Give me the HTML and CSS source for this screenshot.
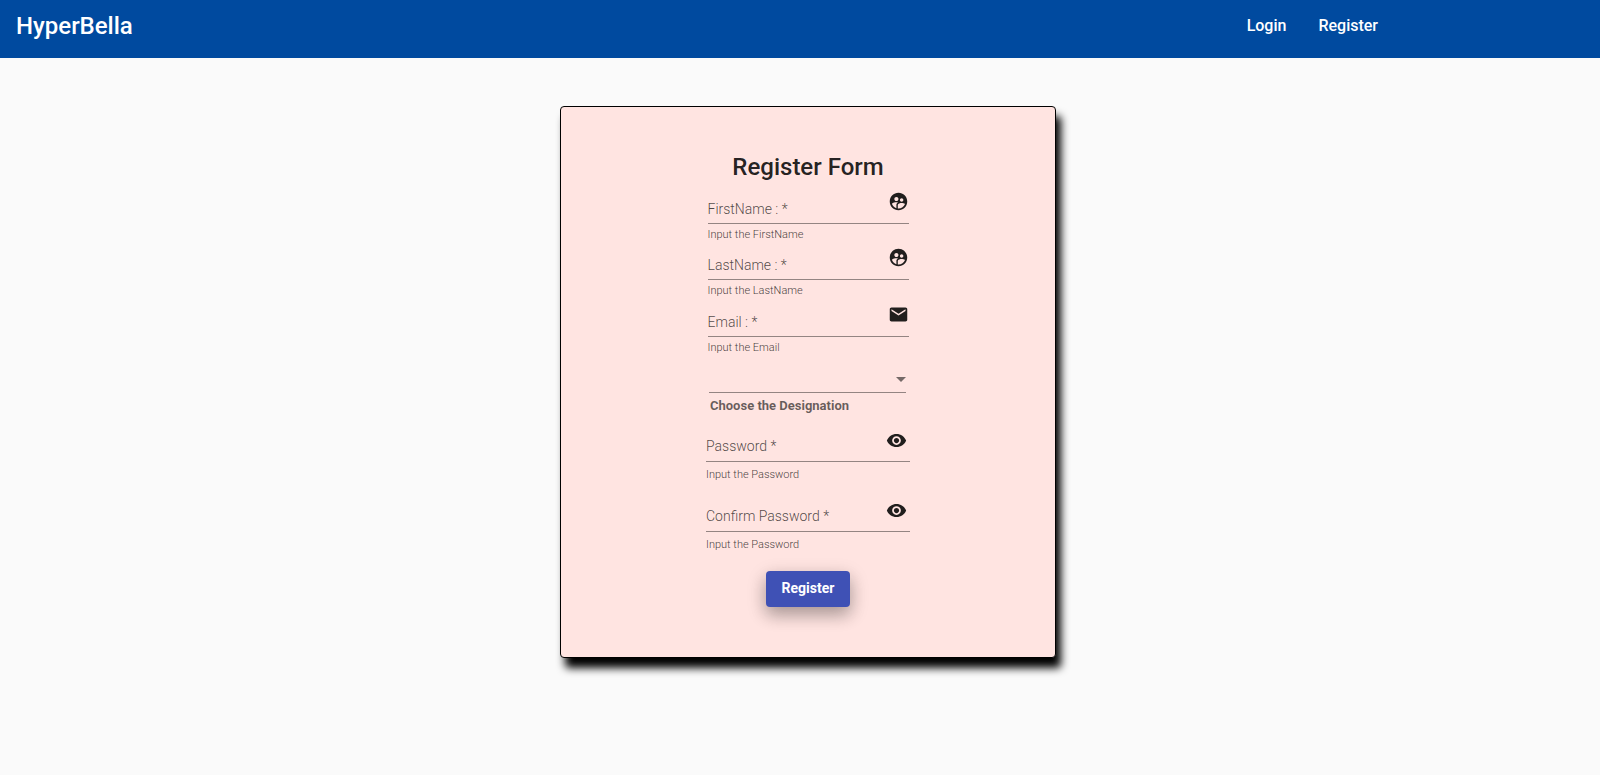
FILE: index.html
```html
<!DOCTYPE html>
<html lang="en">
<head>
<meta charset="utf-8">
<title>HyperBella</title>
<meta name="viewport" content="width=device-width, initial-scale=1">
<link rel="stylesheet" href="styles.css">
</head>
<body>
<svg class="sprite" aria-hidden="true">
  <symbol id="icon-people" viewBox="0 0 24 24"><path d="M11.99 2c-5.52 0-10 4.48-10 10s4.48 10 10 10 10-4.48 10-10-4.48-10-10-10zm3.61 6.34c1.07 0 1.93.86 1.93 1.93 0 1.07-.86 1.93-1.93 1.93-1.07 0-1.93-.86-1.93-1.93-.01-1.07.86-1.93 1.93-1.93zm-6-1.58c1.3 0 2.36 1.06 2.36 2.36 0 1.3-1.06 2.36-2.36 2.36s-2.36-1.06-2.36-2.36c0-1.31 1.05-2.36 2.36-2.36zm0 9.13v3.75c-2.4-.75-4.3-2.6-5.14-4.96 1.05-1.12 3.67-1.69 5.14-1.69.53 0 1.2.08 1.9.22-1.64.87-1.9 2.02-1.9 2.68zM11.99 20c-.27 0-.53-.01-.79-.04v-4.07c0-1.42 2.94-2.13 4.4-2.13 1.07 0 2.92.39 3.84 1.15-1.17 2.97-4.06 5.09-7.45 5.09z"/></symbol>
  <symbol id="icon-mail" viewBox="0 0 24 24"><path d="M20 4H4c-1.1 0-1.99.9-1.99 2L2 18c0 1.1.9 2 2 2h16c1.1 0 2-.9 2-2V6c0-1.1-.9-2-2-2zm0 4l-8 5-8-5V6l8 5 8-5v2z"/></symbol>
  <symbol id="icon-eye" viewBox="0 0 24 24"><path d="M12 4.500C7 4.500 2.730 7.610 1 12c1.730 4.390 6 7.500 11 7.500s9.270-3.110 11-7.500c-1.730-4.390-6-7.500-11-7.500zM12 17c-2.760 0-5-2.240-5-5s2.240-5 5-5 5 2.240 5 5-2.240 5-5 5zm0-8c-1.660 0-3 1.340-3 3s1.340 3 3 3 3-1.340 3-3-1.340-3-3-3z"/></symbol>
</svg>
<header class="toolbar">
  <a class="brand" href="#">HyperBella</a>
  <nav class="nav">
    <a class="nav-link" href="#login">Login</a>
    <a class="nav-link" href="#register">Register</a>
  </nav>
</header>
<main class="page">
  <form class="card">
    <h1 class="title">Register Form</h1>
    <div class="field">
      <div class="box">
        <label class="label" for="first">FirstName : *</label>
        <input class="input" id="first" type="text" aria-describedby="first-hint">
        <svg class="icon" aria-hidden="true"><use href="#icon-people"/></svg>
      </div>
      <p class="hint" id="first-hint">Input the FirstName</p>
    </div>
    <div class="field">
      <div class="box">
        <label class="label" for="last">LastName : *</label>
        <input class="input" id="last" type="text" aria-describedby="last-hint">
        <svg class="icon" aria-hidden="true"><use href="#icon-people"/></svg>
      </div>
      <p class="hint" id="last-hint">Input the LastName</p>
    </div>
    <div class="field field-email">
      <div class="box">
        <label class="label" for="email">Email : *</label>
        <input class="input" id="email" type="email" aria-describedby="email-hint">
        <svg class="icon" aria-hidden="true"><use href="#icon-mail"/></svg>
      </div>
      <p class="hint" id="email-hint">Input the Email</p>
    </div>
    <div class="field field-select">
      <div class="box">
        <select class="select" id="designation"><option value=""></option></select>
        <svg class="arrow" viewBox="0 0 10 5" aria-hidden="true"><path d="M0 0h10L5 5z"/></svg>
      </div>
      <label class="select-label" for="designation">Choose the Designation</label>
    </div>
    <div class="field field-password">
      <div class="box">
        <label class="label" for="password">Password *</label>
        <input class="input" id="password" type="password" aria-describedby="password-hint">
        <button class="toggle" type="button" aria-label="Show password"><svg class="icon" aria-hidden="true"><use href="#icon-eye"/></svg></button>
      </div>
      <p class="hint" id="password-hint">Input the Password</p>
    </div>
    <div class="field field-password">
      <div class="box">
        <label class="label" for="confirm">Confirm Password *</label>
        <input class="input" id="confirm" type="password" aria-describedby="confirm-hint">
        <button class="toggle" type="button" aria-label="Show confirmed password"><svg class="icon" aria-hidden="true"><use href="#icon-eye"/></svg></button>
      </div>
      <p class="hint" id="confirm-hint">Input the Password</p>
    </div>
    <button class="submit" type="submit">Register</button>
  </form>
</main>
</body>
</html>
```
FILE: styles.css
```css
* {
  box-sizing: border-box;
}

body {
  margin: 0;
  min-height: 100vh;
  background: #fafafa;
  color: rgba(0, 0, 0, 0.87);
  font-family: Roboto, "Liberation Sans", sans-serif;
  font-size: 14px;
}

.sprite {
  display: none;
}

.toolbar {
  display: flex;
  justify-content: space-between;
  align-items: flex-start;
  padding: 10px 206px 16px 16px;
  background: #004a9f;
  line-height: 32px;
}

.brand,
.nav-link {
  color: #fff;
  font-weight: 500;
  text-decoration: none;
}

.brand {
  font-size: 24px;
}

.nav {
  display: flex;
}

.nav-link {
  padding: 0 16px;
  font-size: 16px;
}

.page {
  padding: 48px 0;
}

.card {
  display: flex;
  flex-direction: column;
  align-items: center;
  width: 31%;
  min-width: 280px;
  margin-left: 35%;
  padding: 44px 16px 50px;
  border: 1px solid #000;
  border-radius: 4px;
  background: #ffe4e1;
  box-shadow: 5px 10px 8px #000;
}

.title {
  margin: 0 0 7px;
  font-size: 24px;
  font-weight: 500;
  line-height: 32px;
}

.field {
  width: 201px;
}

.box {
  display: grid;
  grid-template-columns: 1fr auto;
  align-items: end;
  height: 34px;
  border-bottom: 1px solid rgba(0, 0, 0, 0.42);
}

.label {
  grid-area: 1 / 1;
  padding-bottom: 6px;
  color: rgba(0, 0, 0, 0.7);
  font-weight: 300;
  line-height: 16px;
}

.input {
  grid-area: 1 / 1;
  width: 100%;
  height: 28px;
  padding: 0;
  border: 0;
  outline: 0;
  background: transparent;
  font: inherit;
}

.icon {
  display: block;
  align-self: start;
  width: 21px;
  height: 21px;
  margin-top: 1px;
  fill: currentColor;
}

.toggle {
  align-self: start;
  margin: 1px 3px 0 0;
  padding: 0;
  border: 0;
  background: transparent;
  color: inherit;
}

.hint {
  margin: 0;
  padding: 5px 0;
  color: rgba(0, 0, 0, 0.76);
  font-size: 11px;
  font-weight: 300;
  line-height: 12px;
}

.field-email {
  margin-top: 1px;
}

.field-select {
  width: 198px;
  padding-right: 1px;
}

.select {
  grid-area: 1 / 1 / 2 / 3;
  width: 100%;
  height: 28px;
  padding: 0;
  border: 0;
  outline: 0;
  background: transparent;
  appearance: none;
  font: inherit;
}

.arrow {
  grid-area: 1 / 2;
  align-self: center;
  width: 10px;
  height: 5px;
  margin-top: 8px;
  fill: rgba(0, 0, 0, 0.54);
  pointer-events: none;
}

.select-label {
  display: block;
  padding: 5px 0 14px 1px;
  color: rgba(0, 0, 0, 0.6);
  font-size: 13px;
  font-weight: 700;
  line-height: 16px;
}

.field-password {
  width: 204px;
}

.field-password .label {
  padding-bottom: 7px;
}

.field-password .hint {
  padding: 7px 0 17px;
}

.submit {
  height: 36px;
  margin-top: 3px;
  padding: 0 16px 2px;
  border: 0;
  border-radius: 4px;
  background: #3f51b5;
  color: #fff;
  font: 700 14px/34px Roboto, "Liberation Sans", sans-serif;
  box-shadow: 0 8px 16px rgba(0, 0, 0, 0.2), 0 6px 20px rgba(0, 0, 0, 0.19);
}
```
